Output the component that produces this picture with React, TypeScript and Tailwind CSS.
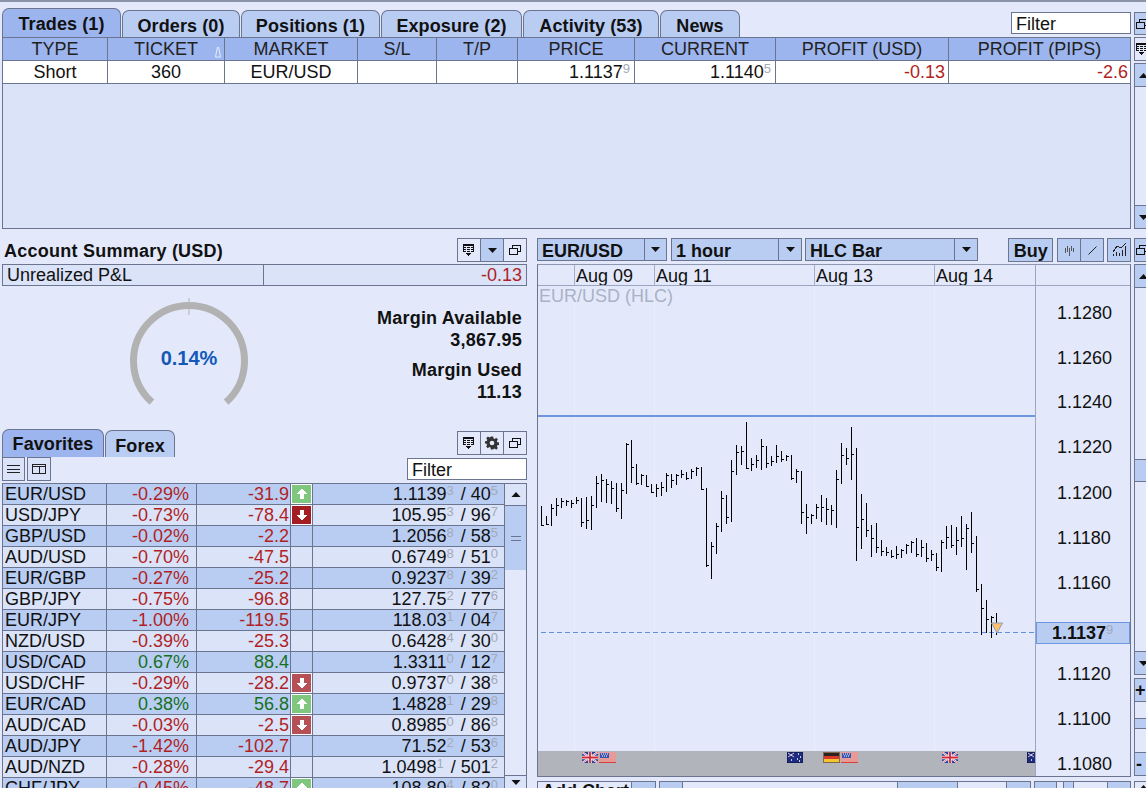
import React from "react";

const BORDER = "border-[#6b7590]";

type Bar = [number, number, number, number];
const barsA: Bar[] = [
  [10,288,348,345],[25,318,345,342],[40,282,348,295],[55,264,318,286],[70,264,294,273],[85,270,288,274],[100,270,294,279],[115,261,282,270],
  [130,264,351,336],[145,261,357,330],[160,258,360,285],[175,198,294,219],[190,192,276,210],[205,207,279,222],[220,213,282,234],[235,219,306,295],
  [250,219,327,240],[265,99,252,102],[280,90,219,171],[295,162,225,219],[310,192,225,195],[325,195,231,228],[340,222,249,245],[355,222,261,234],
  [370,216,258,231],[385,189,246,195],[400,192,234,210],[415,192,225,195],[430,180,204,193],[445,186,210,204],[460,177,207,183],[475,171,198,174],
  [490,171,240,237],[505,234,471,466],[520,396,507,408],[535,339,432,348],[550,243,366,264],[565,255,342,321],[580,150,336,183],[595,105,195,126],
  [610,108,165,123],[625,36,177,174],[640,144,183,162],[655,135,174,150],[670,87,180,108],[685,108,174,159],[700,138,168,153],[715,105,159,138],
  [730,123,156,148],[745,135,153,137],
];
const barsB: Bar[] = [
  [19,135,210,205],[34,177,219,183],[49,183,342,306],[64,282,372,321],[79,312,342,314],[94,282,327,291],[109,255,336,291],[124,264,345,297],
  [139,285,345,300],[154,180,354,207],[169,99,222,135],[184,114,165,144],[199,51,210,132],[214,114,453,351],[229,252,417,327],[244,279,381,360],
  [259,345,441,384],[274,339,429,411],[289,390,438,423],[304,411,438,426],[319,420,444,438],[334,408,447,432],[349,417,444,420],[364,402,432,405],
  [379,393,429,396],[394,384,441,433],[409,390,441,411],[424,399,456,444],[439,420,453,432],[454,429,483,471],[469,390,486,396],[484,348,417,381],
  [499,345,414,405],[514,351,435,390],[529,318,411,384],[544,342,480,354],[559,306,429,399],[574,378,546,537],[589,522,675,594],[604,570,669,627],
  [619,618,684,621],[634,609,675,645],
];

function ChartBars() {
  const toBar = (ox: number) => (b: Bar) => {
    const x = Math.floor(ox + b[0] / 3) + 0.5 - 538;
    const t = 410 + b[1] / 3 - 286;
    const bt = 410 + b[2] / 3 - 286;
    const c = Math.round(410 + b[3] / 3 - 286) + 0.5;
    return `M${x} ${t}V${bt}M${x} ${c}H${x + 2}`;
  };
  const d = [...barsA.map(toBar(538)), ...barsB.map(toBar(785))].join("");
  return <path d={d} stroke="#000" strokeWidth="1" fill="none" shapeRendering="crispEdges" />;
}

function UK() {
  return (
    <svg width="16" height="11" viewBox="0 0 16 11">
      <rect width="16" height="11" fill="#27408f" />
      <path d="M0 0L16 11M16 0L0 11" stroke="#fff" strokeWidth="2" />
      <path d="M0 0L16 11M16 0L0 11" stroke="#d0344a" strokeWidth="0.7" />
      <path d="M8 0V11M0 5.5H16" stroke="#fff" strokeWidth="3.4" />
      <path d="M8 0V11M0 5.5H16" stroke="#d0283c" strokeWidth="1.8" />
    </svg>
  );
}
function US() {
  return (
    <svg width="17" height="11" viewBox="0 0 17 11">
      <rect width="17" height="11" fill="#f5f5f5" />
      <path d="M0 1H17M0 3H17M0 5H17M0 7H17M0 9H17M0 10.5H17" stroke="#d8403c" strokeWidth="1" />
      <rect x="1" y="1" width="9" height="5" fill="#3a56b0" />
      <path d="M2 2h1M4 2h1M6 2h1M8 2h1M3 4h1M5 4h1M7 4h1" stroke="#fff" strokeWidth="1" />
    </svg>
  );
}
function AU() {
  return (
    <svg width="16" height="11" viewBox="0 0 16 11">
      <rect width="16" height="11" fill="#1d2c80" stroke="#0d1440" />
      <path d="M1 1L7 5M7 1L1 5" stroke="#e0c4d0" strokeWidth="1" />
      <path d="M4 3H4.5M11 2h1M13 5h1M10 7h1M12 9h1M4 8h1" stroke="#fff" strokeWidth="1.4" />
    </svg>
  );
}
function DE() {
  return (
    <svg width="17" height="11" viewBox="0 0 17 11">
      <rect width="17" height="4" fill="#2b2320" />
      <rect y="4" width="17" height="3" fill="#d8392b" />
      <rect y="7" width="17" height="4" fill="#f4c62c" />
      <rect x="0.5" y="0.5" width="16" height="10" fill="none" stroke="#7d6a50" />
    </svg>
  );
}

const GridIcon = () => (
  <svg width="12" height="12" viewBox="0 0 12 12" shapeRendering="crispEdges">
    <path d="M0 0H11V8H0Z" fill="#111" />
    <path d="M1 2.5H10M1 4.5H10M1 6.5H10" stroke="#e3e9fb" strokeWidth="1" />
    <path d="M3.5 2V8M7.5 2V8" stroke="#e3e9fb" strokeWidth="1" />
    <path d="M3 9H8V10H7V11H6V12H5V11H4V10H3Z" fill="#111" />
  </svg>
);
const PopIcon = () => (
  <svg width="12" height="12" viewBox="0 0 12 12" shapeRendering="crispEdges" fill="none" stroke="#111">
    <path d="M3.5 3.5V1.5H11.5V7.5H8.5" />
    <path d="M3.5 1H11.5" />
    <path d="M0.5 4.5H8.5V10.5H0.5Z" />
    <path d="M0.5 4H8.5" />
  </svg>
);
const Gear = () => (
  <svg width="14" height="14" viewBox="0 0 24 24" fill="#333">
    <path fillRule="evenodd" d="M10 1h4l.6 3.2 2 .8 2.7-1.8 2.8 2.8-1.8 2.7.8 2 3.1.6v4l-3.1.6-.8 2 1.8 2.7-2.8 2.8-2.7-1.8-2 .8L14 23h-4l-.6-3.2-2-.8-2.7 1.8-2.8-2.8 1.8-2.7-.8-2L0 13V9l3.1-.6.8-2-1.8-2.7 2.8-2.8 2.7 1.8 2-.8zM12 8a4 4 0 100 8 4 4 0 000-8z" />
  </svg>
);
const Down = ({ w = 9 }: { w?: number }) => (
  <svg width={w} height="5" viewBox="0 0 9 5"><path d="M0 0H9L4.500 5Z" fill="#111" /></svg>
);
const Up = ({ w = 9 }: { w?: number }) => (
  <svg width={w} height="5" viewBox="0 0 9 5"><path d="M0 5H9L4.500 0Z" fill="#111" /></svg>
);
const ChartIcon = () => (
  <svg width="15" height="14" viewBox="0 0 15 14" fill="none" stroke="#222" strokeWidth="1" shapeRendering="crispEdges">
    <path d="M1 9L5 3L9 5L14 0" />
    <path d="M1.500 11V13M4.500 9V13M7.500 10V13M10.500 7V13M13.500 3V13" strokeWidth="1.400" />
  </svg>
);
const BarsIcon = () => (
  <svg width="11" height="11" viewBox="0 0 11 11" stroke="#555" shapeRendering="crispEdges">
    <path d="M1.500 3V8M3.500 1V7M5.500 3V11M7.500 1V6M9.500 3V7" />
  </svg>
);
const LineIcon = () => (
  <svg width="9" height="9" viewBox="0 0 9 9" stroke="#222"><path d="M0.500 8.500L8.500 0.500" /></svg>
);

function Tab({ label, w, h, active }: { label: string; w: string; h: string; active?: boolean }) {
  return (
    <div className={`${w} ${h} shrink-0 flex items-center justify-center ${active ? "pt-[1px] bg-[#9db5ee]" : "pt-[3px] bg-[#b9cdf3]"} border border-b-0 ${BORDER} rounded-t-[7px] font-bold text-[18px] leading-none tracking-[0.1px] text-[#111]`}>
      {label}
    </div>
  );
}

function Btn({ w, active, children }: { w: string; active?: boolean; children?: React.ReactNode }) {
  return (
    <div className={`${w} h-full flex items-center justify-center border-r last:border-r-0 ${BORDER} ${active ? "bg-[#b9cdf3]" : ""}`}>
      {children}
    </div>
  );
}

function Filter({ w }: { w: string }) {
  return (
    <div className={`${w} h-[22px] bg-white border ${BORDER} pl-[4px] text-[18px] leading-[23px] text-[#111]`}>Filter</div>
  );
}

function Select({ label, w, arrow }: { label: string; w: string; arrow: string }) {
  return (
    <div className={`${w} h-[23px] flex bg-[#b9cdf3] border ${BORDER} shrink-0`}>
      <div className={`flex-1 pl-[4px] font-bold text-[18px] leading-[24px] text-[#111] border-r ${BORDER}`}>{label}</div>
      <div className={`${arrow} flex items-center justify-center`}><Down /></div>
    </div>
  );
}

const cols: { l: string; w: string }[] = [
  { l: "TYPE", w: "w-[105px]" },
  { l: "TICKET", w: "w-[117px]" },
  { l: "MARKET", w: "w-[133px]" },
  { l: "S/L", w: "w-[79px]" },
  { l: "T/P", w: "w-[81px]" },
  { l: "PRICE", w: "w-[117px]" },
  { l: "CURRENT", w: "w-[141px]" },
  { l: "PROFIT (USD)", w: "w-[173px]" },
  { l: "PROFIT (PIPS)", w: "w-[181px]" },
];

const Sup = ({ children }: { children: React.ReactNode }) => (
  <span className="text-[#a3a9b8] text-[13px] leading-none relative top-[-4px]">{children}</span>
);

function TradeRow() {
  const RED = "text-[#b01f24]";
  const c = "h-full border-r last:border-r-0 " + BORDER + " flex items-center pt-[1px]";
  return (
    <div className={`flex h-[23px] bg-white border-b ${BORDER} text-[18px] text-[#111]`}>
      <div className={`${c} ${cols[0].w} justify-center`}>Short</div>
      <div className={`${c} ${cols[1].w} justify-center`}>360</div>
      <div className={`${c} ${cols[2].w} justify-center`}>EUR/USD</div>
      <div className={`${c} ${cols[3].w}`} />
      <div className={`${c} ${cols[4].w}`} />
      <div className={`${c} ${cols[5].w} justify-end pr-[4px]`}><span>1.1137</span><Sup>9</Sup></div>
      <div className={`${c} ${cols[6].w} justify-end pr-[4px]`}><span>1.1140</span><Sup>5</Sup></div>
      <div className={`${c} ${cols[7].w} justify-end pr-[3px] ${RED}`}>-0.13</div>
      <div className={`${c} ${cols[8].w} justify-end pr-[2px] ${RED}`}>-2.6</div>
    </div>
  );
}

type Q = [string, string, string, "" | "upB" | "downD" | "upF" | "downF", string, string, string, string];
const quotes: Q[] = [
  ["EUR/USD","-0.29%","-31.9","upB","1.1139","3","40","5"],
  ["USD/JPY","-0.73%","-78.4","downD","105.95","3","96","7"],
  ["GBP/USD","-0.02%","-2.2","","1.2056","8","58","5"],
  ["AUD/USD","-0.70%","-47.5","","0.6749","8","51","0"],
  ["EUR/GBP","-0.27%","-25.2","","0.9237","8","39","2"],
  ["GBP/JPY","-0.75%","-96.8","","127.75","2","77","6"],
  ["EUR/JPY","-1.00%","-119.5","","118.03","1","04","7"],
  ["NZD/USD","-0.39%","-25.3","","0.6428","4","30","0"],
  ["USD/CAD","0.67%","88.4","","1.3311","0","12","7"],
  ["USD/CHF","-0.29%","-28.2","downF","0.9737","0","38","6"],
  ["EUR/CAD","0.38%","56.8","upB","1.4828","1","29","8"],
  ["AUD/CAD","-0.03%","-2.5","downF","0.8985","0","86","8"],
  ["AUD/JPY","-1.42%","-102.7","","71.52","2","53","6"],
  ["AUD/NZD","-0.28%","-29.4","","1.0498","1","501","2"],
  ["CHF/JPY","-0.45%","-48.7","upB","108.80","4","82","0"],
];

function Arrow({ kind }: { kind: Q[3] }) {
  if (!kind) return null;
  const up = kind === "upB" || kind === "upF";
  const bg = kind === "upB" ? "bg-[#7fc67f]" : kind === "downD" ? "bg-[#a41d22]" : "bg-[#b45056]";
  return (
    <div className={`w-[21px] h-[20px] ${bg} border border-white flex items-center justify-center`}>
      <svg width="10" height="10" viewBox="0 0 10 10" shapeRendering="crispEdges" fill="#fff">
        {up ? <path d="M3 10V5H0V4H1V3H2V2H3V1H4V0H6V1H7V2H8V3H9V4H10V5H7V10Z" /> : <path d="M3 0V5H0V6H1V7H2V8H3V9H4V10H6V9H7V8H8V7H9V6H10V5H7V0Z" />}
      </svg>
    </div>
  );
}

function QuoteRow({ q, i }: { q: Q; i: number }) {
  const color = q[1].startsWith("-") ? "text-[#b01f24]" : "text-[#17701f]";
  const cell = `h-full border-r ${BORDER} flex items-center`;
  return (
    <div className={`flex h-[21px] shrink-0 border-b ${BORDER} text-[18px] text-[#111] ${i % 2 === 0 ? "bg-[#b9cdf3]" : "bg-[#dae3f8]"}`}>
      <div className={`${cell} w-[104px] pl-[2px]`}>{q[0]}</div>
      <div className={`${cell} w-[90px] justify-end pr-[7px] ${color}`}>{q[1]}</div>
      <div className={`${cell} w-[94px] justify-end pr-[1px] ${color}`}>{q[2]}</div>
      <div className={`${cell} w-[22px] justify-center`}><Arrow kind={q[3]} /></div>
      <div className="h-full flex-1 flex items-center justify-end pr-[6px]">
        <span>{q[4]}</span><Sup>{q[5]}</Sup><span className="ml-[7px]">/ {q[6]}</span><Sup>{q[7]}</Sup>
      </div>
    </div>
  );
}

function Gauge() {
  return (
    <div className="relative w-[126px] h-[118px] shrink-0">
      <svg width="126" height="118" viewBox="0 0 126 118" className="absolute inset-0">
        <path d="M25.9 104.200A55.500 55.500 0 1 1 100.100 104.200" fill="none" stroke="#b2b2b2" strokeWidth="7" />
        <path d="M63 0V17" stroke="#b2b2b2" strokeWidth="1" />
      </svg>
      <div className="absolute inset-x-0 top-[50px] text-center font-bold text-[20px] leading-none text-[#1459b8]">0.14%</div>
    </div>
  );
}

const priceLabels: [string, string][] = [
  ["1.1280", "top-[17px]"], ["1.1260", "top-[62px]"], ["1.1240", "top-[106px]"], ["1.1220", "top-[151px]"],
  ["1.1200", "top-[197px]"], ["1.1180", "top-[242px]"], ["1.1160", "top-[287px]"], ["1.1120", "top-[378px]"],
  ["1.1100", "top-[423px]"], ["1.1080", "top-[468px]"],
];

function Chart() {
  return (
    <div className={`w-[594px] flex-1 border border-[#6b7590] border-t-[#8d97b0] flex flex-col mt-[2px] min-h-0`}>
      <div className="h-[21px] flex border-b border-[#9aa6c4] shrink-0 text-[18px] leading-[22px] text-[#111]">
        <div className="flex w-[497px] overflow-hidden">
          <div className="w-[36px] shrink-0" />
          <div className="w-[80px] shrink-0 border-l border-[#a5b0cc] pl-[1px]">Aug 09</div>
          <div className="w-[160px] shrink-0 border-l border-[#a5b0cc] pl-[1px]">Aug 11</div>
          <div className="w-[120px] shrink-0 border-l border-[#a5b0cc] pl-[1px]">Aug 13</div>
          <div className="w-[101px] shrink-0 border-l border-[#a5b0cc] pl-[1px]">Aug 14</div>
        </div>
        <div className="flex-1 border-l border-[#9aa6c4]" />
      </div>
      <div className="flex flex-1 min-h-0">
        <div className="w-[497px] relative flex flex-col">
          <div className="flex-1 relative overflow-hidden">
            <svg width="497" height="465" viewBox="0 0 497 465" className="absolute inset-0">
              <path d="M36.500 0V465M116.500 0V465M276.500 0V465M396.500 0V465" stroke="#e9eefc" />
              <rect x="0" y="129" width="497" height="2" fill="#6f97e0" />
              <path d="M3 346.500H497" stroke="#5b93e0" strokeDasharray="5 3" />
              <ChartBars />
              <path d="M453.500 337H464.500L459 347Z" fill="#ffc06a" stroke="#8c9dc2" />
            </svg>
            <div className="absolute left-[1px] top-0 text-[18px] leading-[20px] text-[#aab2c6]">EUR/USD (HLC)</div>
          </div>
          <div className="h-[25px] bg-[#b1b4bb] relative shrink-0 overflow-hidden">
            <div className="absolute left-[44px] top-[1px] flex gap-[1px]"><UK /><US /></div>
            <div className="absolute left-[249px] top-[1px]"><AU /></div>
            <div className="absolute left-[285px] top-[1px] flex gap-[1px]"><DE /><US /></div>
            <div className="absolute left-[404px] top-[1px]"><UK /></div>
            <div className="absolute left-[489px] top-[1px]"><AU /></div>
          </div>
        </div>
        <div className="flex-1 border-l border-[#9aa6c4] relative text-[18px] leading-[20px] text-[#111]">
          {priceLabels.map(([p, t]) => (
            <div key={p} className={`absolute left-[21px] ${t}`}>{p}</div>
          ))}
          <div className="absolute left-0 right-0 top-[336px] h-[22px] bg-[#b9cdf3] border border-[#6f97e0] font-bold flex items-center pl-[15px]">
            <span>1.1137</span><Sup><span className="font-normal">9</span></Sup>
          </div>
        </div>
      </div>
    </div>
  );
}

function RailBtn({ h, children, light }: { h: string; children?: React.ReactNode; light?: boolean }) {
  return (
    <div className={`${h} w-[24px] shrink-0 border ${BORDER} ${light ? "" : "bg-[#b9cdf3]"} flex items-center justify-center`}>
      {children}
    </div>
  );
}

export default function App() {
  return (
    <div className="w-[1146px] h-[788px] overflow-hidden bg-[#e3e9fb] border-t-2 border-[#8b93a9] font-['Liberation_Sans',Arial,sans-serif]">
      {/* top panel */}
      <div className="flex h-[227px] pl-[2px]">
        <div className="w-[1129px] flex flex-col">
          <div className="h-[35px] flex items-end justify-between shrink-0">
            <div className="flex gap-[1px] items-end">
              <Tab label="Trades (1)" w="w-[119px]" h="h-[29px]" active />
              <Tab label="Orders (0)" w="w-[118px]" h="h-[27px]" />
              <Tab label="Positions (1)" w="w-[139px]" h="h-[27px]" />
              <Tab label="Exposure (2)" w="w-[141px]" h="h-[27px]" />
              <Tab label="Activity (53)" w="w-[136px]" h="h-[27px]" />
              <Tab label="News" w="w-[80px]" h="h-[27px]" />
            </div>
            <div className="mb-[3px]"><Filter w="w-[120px]" /></div>
          </div>
          <div className={`flex-1 border ${BORDER} bg-[#dae3f8] flex flex-col`}>
            <div className={`flex h-[23px] bg-[#9db5ee] border-b ${BORDER} text-[18px] text-[#222]`}>
              {cols.map((c) => (
                <div key={c.l} className={`${c.w} relative h-full border-r last:border-r-0 ${BORDER} flex items-center justify-center pt-[1px]`}>
                  {c.l}
                  {c.l === "TICKET" && (
                    <svg width="6" height="12" viewBox="0 0 6 12" className="absolute right-[3px] top-[8px]">
                      <path d="M2.500 1L0.500 11H5.500L3.500 1" fill="none" stroke="#e6ebfa" />
                    </svg>
                  )}
                </div>
              ))}
            </div>
            <TradeRow />
          </div>
        </div>
        <div className="w-[12px] ml-[3px] overflow-hidden flex flex-col pt-[10px]">
          <RailBtn h="h-[23px]"><span className="mr-[8px]"><PopIcon /></span></RailBtn>
          <div className="h-[2px] shrink-0" />
          <RailBtn h="h-[24px]" light><span className="mr-[8px]"><GridIcon /></span></RailBtn>
          <div className={`flex flex-col flex-1 w-[24px] border ${BORDER} mt-[2px]`}>
            <div className={`h-[23px] bg-[#b9cdf3] border-b ${BORDER} flex items-center justify-center`}><span className="mr-[6px]"><Up /></span></div>
            <div className="flex-1" />
            <div className={`h-[23px] bg-[#b9cdf3] border-t ${BORDER} flex items-center justify-center`}><span className="mr-[6px]"><Down /></span></div>
          </div>
        </div>
      </div>

      {/* bottom */}
      <div className="flex pl-[2px] mt-[9px] h-[550px]">
        {/* left */}
        <div className="w-[525px] flex flex-col">
          <div className="h-[26px] flex justify-between shrink-0">
            <div className="font-bold text-[18px] leading-[27px] pl-[2px] tracking-[0.24px] text-[#111]">Account Summary (USD)</div>
            <div className={`flex h-[24px] w-[70px] border ${BORDER}`}>
              <Btn w="w-[23px]"><GridIcon /></Btn>
              <Btn w="w-[23px]" active><Down /></Btn>
              <Btn w="w-[22px]"><PopIcon /></Btn>
            </div>
          </div>
          <div className={`h-[22px] flex border ${BORDER} bg-[#dae3f8] text-[18px] text-[#111] shrink-0`}>
            <div className={`w-[261px] border-r ${BORDER} pl-[4px] leading-[21px]`}>Unrealized P&amp;L</div>
            <div className="flex-1 text-right pr-[4px] leading-[21px] text-[#b01f24]">-0.13</div>
          </div>
          <div className="h-[143px] flex justify-between shrink-0">
            <div className="ml-[124px] mt-[12px]"><Gauge /></div>
            <div className="text-right pr-[5px] pt-[21px] font-bold text-[18px] leading-[22px] tracking-[0.2px] text-[#111]">
              <div>Margin Available</div>
              <div>3,867.95</div>
              <div className="mt-[8px]">Margin Used</div>
              <div>11.13</div>
            </div>
          </div>
          <div className="h-[28px] flex items-end justify-between shrink-0">
            <div className="flex gap-[1px] items-end">
              <Tab label="Favorites" w="w-[102px]" h="h-[28px]" active />
              <Tab label="Forex" w="w-[70px]" h="h-[27px]" />
            </div>
            <div className={`flex h-[24px] w-[70px] border ${BORDER} mb-[2px]`}>
              <Btn w="w-[23px]"><GridIcon /></Btn>
              <Btn w="w-[23px]"><Gear /></Btn>
              <Btn w="w-[22px]"><PopIcon /></Btn>
            </div>
          </div>
          <div className="h-[26px] flex justify-between items-start shrink-0">
            <div className="flex gap-[2px] ml-[0px]">
              <div className={`w-[23px] h-[24px] bg-[#dae3f8] border ${BORDER} flex items-center justify-center`}>
                <svg width="13" height="10" viewBox="0 0 13 10" stroke="#222" shapeRendering="crispEdges"><path d="M0 1.500H13M0 5.500H13M0 8.500H13" /></svg>
              </div>
              <div className={`w-[24px] h-[24px] bg-[#dae3f8] border ${BORDER} flex items-center justify-center`}>
                <svg width="14" height="10" viewBox="0 0 14 10" fill="none" stroke="#222" shapeRendering="crispEdges"><path d="M0.500 0.500H13.500V9.500H0.500ZM0.500 2.500H13.500M7 2V10" /></svg>
              </div>
            </div>
            <div className="mt-[1px]"><Filter w="w-[120px]" /></div>
          </div>
          <div className="flex-1 flex min-h-0 overflow-hidden">
            <div className={`w-[502px] flex flex-col border-l border-t ${BORDER}`}>
              {quotes.map((q, i) => <QuoteRow key={q[0]} q={q} i={i} />)}
            </div>
            <div className={`w-[23px] flex flex-col border border-b-0 ${BORDER}`}>
              <div className={`h-[22px] shrink-0 bg-[#dae3f8] border-b ${BORDER} flex items-center justify-center`}><Up w={10} /></div>
              <div className="h-[64px] shrink-0 bg-[#b9cdf3] flex items-center justify-center">
                <svg width="10" height="5" viewBox="0 0 10 5" stroke="#6b7590" shapeRendering="crispEdges"><path d="M0 0.500H10M0 4.500H10" /></svg>
              </div>
              <div className="flex-1" />
              <div className={`h-[13px] shrink-0 bg-[#dae3f8] border-t ${BORDER} flex items-start justify-center pt-[4px]`}><Down w={10} /></div>
            </div>
          </div>
        </div>

        {/* right */}
        <div className="ml-[10px] w-[594px] flex flex-col">
          <div className="h-[24px] flex shrink-0">
            <Select label="EUR/USD" w="w-[130px]" arrow="w-[21px]" />
            <div className="ml-[4px]"><Select label="1 hour" w="w-[131px]" arrow="w-[22px]" /></div>
            <div className="ml-[3px]"><Select label="HLC Bar" w="w-[173px]" arrow="w-[22px]" /></div>
            <div className={`ml-[30px] w-[46px] h-[24px] bg-[#b9cdf3] border ${BORDER} text-center font-bold text-[18px] leading-[24px] text-[#111]`}>Buy</div>
            <div className={`ml-[4px] flex w-[47px] h-[24px] bg-[#b9cdf3] border ${BORDER}`}>
              <Btn w="w-[23px]"><BarsIcon /></Btn>
              <Btn w="w-[22px]"><LineIcon /></Btn>
            </div>
            <div className={`ml-[3px] w-[24px] h-[24px] bg-[#b9cdf3] border ${BORDER} flex items-center justify-center`}><ChartIcon /></div>
          </div>
          <Chart />
          <div className={`flex h-[7px] mt-[4px] shrink-0 overflow-hidden text-[18px] leading-[18px] text-[#111]`}>
            <div className={`w-[95px] h-[24px] border ${BORDER} pl-[4px] font-bold`}>Add Chart</div>
            <div className={`w-[24px] h-[24px] border border-l-0 ${BORDER} bg-[#b9cdf3]`} />
            <div className={`ml-[3px] w-[24px] h-[24px] border ${BORDER} bg-[#b9cdf3]`} />
            <div className={`w-[215px] h-[24px] border border-l-0 ${BORDER}`} />
            <div className={`w-[60px] h-[24px] border border-l-0 ${BORDER} bg-[#b9cdf3]`} />
            <div className={`w-[49px] h-[24px] border border-l-0 ${BORDER}`} />
            <div className={`w-[24px] h-[24px] border border-l-0 ${BORDER} bg-[#b9cdf3]`} />
            <div className={`ml-[3px] w-[23px] h-[24px] border ${BORDER} bg-[#b9cdf3]`} />
            <div className={`w-[7px] h-[24px] border border-l-0 ${BORDER}`} />
            <div className={`w-[10px] h-[24px] border border-l-0 ${BORDER} bg-[#b9cdf3]`} />
            <div className={`w-[34px] h-[24px] border border-l-0 ${BORDER}`} />
            <div className={`w-[23px] h-[24px] border border-l-0 ${BORDER} bg-[#b9cdf3]`} />
          </div>
        </div>

        {/* right rail */}
        <div className="w-[12px] ml-[3px] overflow-hidden flex flex-col">
          <RailBtn h="h-[24px]"><span className="mr-[8px]"><PopIcon /></span></RailBtn>
          <div className={`flex flex-col w-[24px] h-[411px] border ${BORDER} mt-[2px] shrink-0`}>
            <div className={`h-[23px] bg-[#b9cdf3] border-b ${BORDER} flex items-center justify-center`}><span className="mr-[6px]"><Up /></span></div>
            <div className="h-[171px]" />
            <div className={`h-[23px] bg-[#b9cdf3] border-y ${BORDER}`} />
            <div className="flex-1" />
            <div className={`h-[23px] bg-[#b9cdf3] border-t ${BORDER} flex items-center justify-center`}><span className="mr-[6px]"><Down /></span></div>
          </div>
          <div className={`flex flex-col w-[24px] h-[98px] border ${BORDER} mt-[3px] shrink-0`}>
            <div className={`h-[23px] bg-[#b9cdf3] border-b ${BORDER} flex items-center pl-[0px] font-bold text-[18px] leading-none text-[#111]`}>+</div>
            <div className="h-[16px]" />
            <div className={`h-[11px] bg-[#b9cdf3] border-y ${BORDER}`} />
            <div className="flex-1" />
            <div className={`h-[23px] bg-[#b9cdf3] border-t ${BORDER} flex items-center pl-[1px] font-bold text-[18px] leading-none text-[#111]`}>-</div>
          </div>
          <div className={`h-[24px] w-[24px] mt-[5px] shrink-0 border ${BORDER} flex justify-center pt-[3px]`}><span className="mr-[6px]"><Up /></span></div>
        </div>
      </div>
    </div>
  );
}
